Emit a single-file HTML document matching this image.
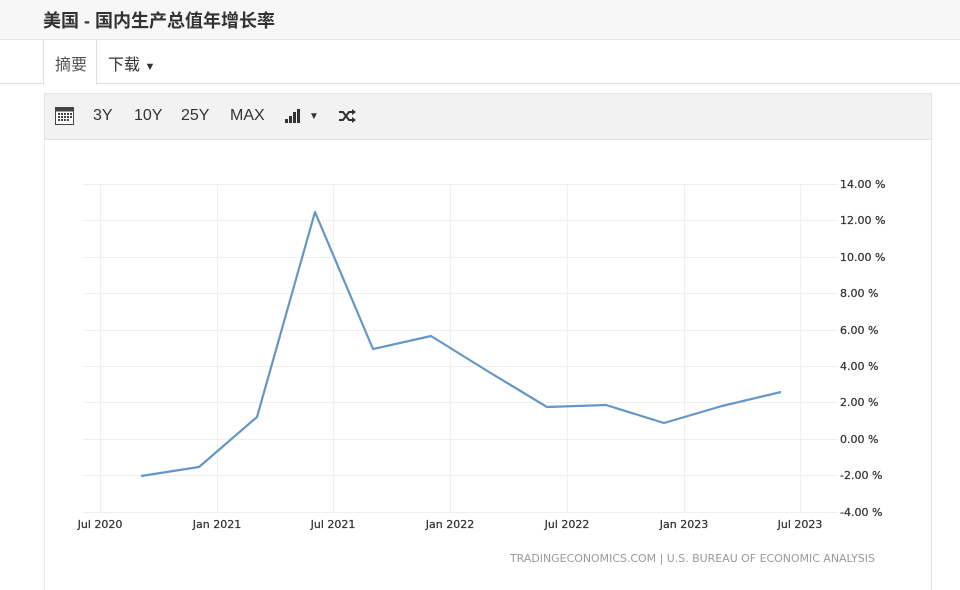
<!DOCTYPE html>
<html><head><meta charset="utf-8"><style>
*{margin:0;padding:0;box-sizing:border-box}
body{width:960px;height:585px;background:#fff;font-family:"Liberation Sans","Noto Sans CJK SC",sans-serif;position:relative;overflow:hidden}
.hdr{position:absolute;left:0;top:0;width:960px;height:40px;background:#f7f7f7;border-bottom:1px solid #e3e3e3}
.hdr h1{position:absolute;left:43px;top:7px;font-size:18px;font-weight:bold;color:#333}
.tabs{position:absolute;left:0;top:40px;width:960px;height:44px;border-bottom:1px solid #ddd}
.tab1{position:absolute;left:43px;top:0;width:54px;height:45px;background:#fff;border:1px solid #ddd;border-top:none;border-bottom:1px solid #fff;font-size:16px;color:#555;padding:11px 0 0 11px}
.tab2{position:absolute;left:108px;top:11px;font-size:16px;color:#333}
.tool{position:absolute;left:44px;top:93px;width:888px;height:47px;background:#f2f2f2;border:1px solid #e3e3e3;font-size:16px;color:#333}
.tool span{position:absolute;top:13px}
.panel{position:absolute;left:44px;top:140px;width:888px;height:450px;border-left:1px solid #eee;border-right:1px solid #e3e3e3}
svg text{font-family:"DejaVu Sans",sans-serif}
</style></head><body>
<div class="hdr"><h1>美国 - 国内生产总值年增长率</h1></div>
<div class="tabs"><div class="tab1">摘要</div><div class="tab2">下载 <span style="font-size:11px">▼</span></div></div>
<div class="tool">
<svg style="position:absolute;left:10px;top:13px" width="19" height="18" viewBox="0 0 19 18"><rect x="0.5" y="0.5" width="18" height="17" fill="#fff" stroke="#444"/><rect x="0.5" y="0.5" width="18" height="4" fill="#444"/><g fill="#444"><rect x="3" y="6" width="2" height="2"/><rect x="6" y="6" width="2" height="2"/><rect x="9" y="6" width="2" height="2"/><rect x="12" y="6" width="2" height="2"/><rect x="15" y="6" width="2" height="2"/><rect x="3" y="9" width="2" height="2"/><rect x="6" y="9" width="2" height="2"/><rect x="9" y="9" width="2" height="2"/><rect x="12" y="9" width="2" height="2"/><rect x="15" y="9" width="2" height="2"/><rect x="3" y="12" width="2" height="2"/><rect x="6" y="12" width="2" height="2"/><rect x="9" y="12" width="2" height="2"/><rect x="12" y="12" width="2" height="2"/></g></svg>
<span style="left:48px">3Y</span><span style="left:89px">10Y</span><span style="left:136px">25Y</span><span style="left:185px">MAX</span>
<svg style="position:absolute;left:240px;top:15px" width="16" height="14"><rect x="0" y="10" width="3" height="4" fill="#333"/><rect x="4" y="7" width="3" height="7" fill="#333"/><rect x="8" y="3" width="3" height="11" fill="#333"/><rect x="12" y="0" width="3" height="14" fill="#333"/></svg>
<span style="left:264px;font-size:10px;top:17px">▼</span>
<svg style="position:absolute;left:293px;top:15px" width="18" height="14" viewBox="0 0 18 14"><path d="M1 3h4l6 8h4M1 11h4l6-8h4" fill="none" stroke="#333" stroke-width="2"/><path d="M14 0l4 3-4 3zM14 8l4 3-4 3z" fill="#333"/></svg>
</div>
<div class="panel"></div>
<svg style="position:absolute;left:0;top:0" width="960" height="585">
<g stroke="#efefef" stroke-width="1">
<line x1="83" x2="838" y1="184.5" y2="184.5"/><line x1="83" x2="838" y1="220.5" y2="220.5"/><line x1="83" x2="838" y1="257.5" y2="257.5"/><line x1="83" x2="838" y1="293.5" y2="293.5"/><line x1="83" x2="838" y1="330.5" y2="330.5"/><line x1="83" x2="838" y1="366.5" y2="366.5"/><line x1="83" x2="838" y1="402.5" y2="402.5"/><line x1="83" x2="838" y1="439.5" y2="439.5"/><line x1="83" x2="838" y1="475.5" y2="475.5"/><line x1="83" x2="838" y1="512.5" y2="512.5"/>
<line x1="100.5" x2="100.5" y1="184" y2="512"/><line x1="217.5" x2="217.5" y1="184" y2="512"/><line x1="333.5" x2="333.5" y1="184" y2="512"/><line x1="450.5" x2="450.5" y1="184" y2="512"/><line x1="567.5" x2="567.5" y1="184" y2="512"/><line x1="684.5" x2="684.5" y1="184" y2="512"/><line x1="800.5" x2="800.5" y1="184" y2="512"/>
</g>
<polyline points="141,476 199,467 257,417 315,212 373,349 431,336 489,372 547,407 606,405 664,423 722,406 781,392" fill="none" stroke="#6596c4" stroke-width="2.2" stroke-linejoin="round"/>
<g font-size="11" fill="#333" stroke="#333" stroke-width="0.25">
<text x="840" y="188">14.00 %</text><text x="840" y="224">12.00 %</text><text x="840" y="261">10.00 %</text><text x="840" y="297">8.00 %</text><text x="840" y="334">6.00 %</text><text x="840" y="370">4.00 %</text><text x="840" y="406">2.00 %</text><text x="840" y="443">0.00 %</text><text x="840" y="479">-2.00 %</text><text x="840" y="516">-4.00 %</text>
</g>
<g font-size="11" fill="#333" stroke="#333" stroke-width="0.25" text-anchor="middle">
<text x="100" y="528">Jul 2020</text><text x="217" y="528">Jan 2021</text><text x="333" y="528">Jul 2021</text><text x="450" y="528">Jan 2022</text><text x="567" y="528">Jul 2022</text><text x="684" y="528">Jan 2023</text><text x="800" y="528">Jul 2023</text>
</g>
<text x="510" y="562" font-size="11" fill="#999" textLength="365" lengthAdjust="spacingAndGlyphs">TRADINGECONOMICS.COM | U.S. BUREAU OF ECONOMIC ANALYSIS</text>
</svg>
</body></html>
